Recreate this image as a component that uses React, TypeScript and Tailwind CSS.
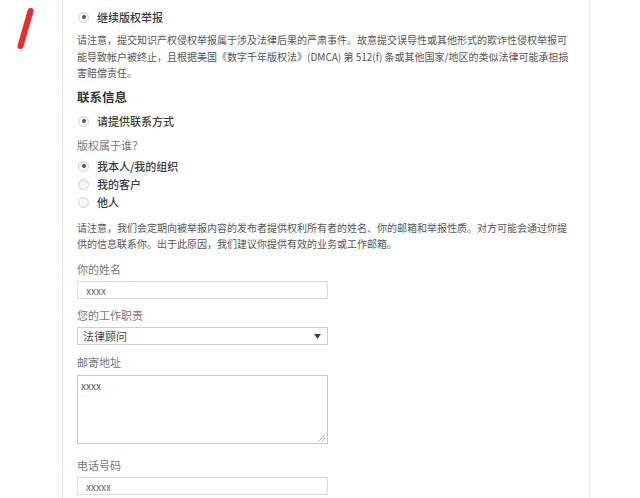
import React from "react";

const font = { fontFamily: '"Noto Sans CJK SC", "Noto Sans", sans-serif' };

function Radio({ checked, label }: { checked?: boolean; label: string }) {
  return (
    <div className="flex h-[18px] items-center">
      <span className="ml-[1px] flex h-[11px] w-[11px] items-center justify-center rounded-full border border-[#d4d4d4] bg-[#f7f7f7] shadow-[inset_0_1px_1px_rgba(0,0,0,0.06)]">
        {checked && <span className="h-[4px] w-[4px] rounded-full bg-[#555]" />}
      </span>
      <span className="ml-[8px] text-[11px] font-medium leading-[18px] text-[#3a3a3a]">{label}</span>
    </div>
  );
}

function Label({ text, mt }: { text: string; mt: string }) {
  return (
    <div className={`${mt} flex h-[18px] items-center text-[11px] text-[#777]`}>{text}</div>
  );
}

export default function App() {
  return (
    <div className="flex h-[498px] w-[640px] overflow-hidden bg-white" style={font}>
      <div className="w-[62px] shrink-0">
        <svg width="62" height="60" viewBox="0 0 62 60">
          <path d="M30.5 11 L20.5 46" stroke="#ee2a2a" strokeWidth="6" strokeLinecap="round" fill="none" />
        </svg>
      </div>
      <div className="flex w-[528px] shrink-0 flex-col border-l border-r border-[#e6e6e6] pl-[14px]">
        <div className="mt-[8px]">
          <Radio checked label="继续版权举报" />
        </div>
        <div className="mt-[6px] text-[10px] leading-[16.5px] text-[#555] whitespace-nowrap">
          <div>请注意，提交知识产权侵权举报属于涉及法律后果的严肃事件。故意提交误导性或其他形式的欺诈性侵权举报可</div>
          <div>能导致帐户被终止，且根据美国《数字千年版权法》(DMCA) 第 512(f) 条或其他国家/地区的类似法律可能承担损</div>
          <div>害赔偿责任。</div>
        </div>
        <div className="mt-[6.5px] flex h-[18px] items-center text-[12.5px] font-bold text-[#333]">联系信息</div>
        <div className="mt-[6px]">
          <Radio checked label="请提供联系方式" />
        </div>
        <Label text="版权属于谁？" mt="mt-[6px]" />
        <div className="mt-[3px] flex flex-col">
          <Radio checked label="我本人/我的组织" />
          <Radio label="我的客户" />
          <Radio label="他人" />
        </div>
        <div className="mt-[9px] text-[10px] leading-[16px] text-[#555] whitespace-nowrap">
          <div>请注意，我们会定期向被举报内容的发布者提供权利所有者的姓名、你的邮箱和举报性质。对方可能会通过你提</div>
          <div>供的信息联系你。出于此原因，我们建议你提供有效的业务或工作邮箱。</div>
        </div>
        <Label text="你的姓名" mt="mt-[8px]" />
        <div className="mt-[3px] flex h-[18px] w-[251px] items-center border border-[#dcdcdc] pl-[8px] text-[10px] text-[#666]">xxxx</div>
        <Label text="您的工作职责" mt="mt-[7px]" />
        <div className="mt-[3px] flex h-[18px] w-[251px] items-center justify-between border border-[#d0d0d0] pl-[5px] pr-[6px] text-[11px] text-[#444]">
          <span>法律顾问</span>
          <svg width="7" height="5" viewBox="0 0 7 5"><path d="M0 0 L7 0 L3.5 5 Z" fill="#444" /></svg>
        </div>
        <Label text="邮寄地址" mt="mt-[8px]" />
        <div className="relative mt-[4px] h-[69px] w-[251px] border border-[#c8c8c8] pl-[3px] pt-[3px] text-[10px] leading-[14px] text-[#555]">
          xxxx
          <svg className="absolute bottom-[1px] right-[1px]" width="8" height="8" viewBox="0 0 8 8">
            <path d="M7 1 L1 7 M7 4 L4 7" stroke="#999" strokeWidth="0.8" />
          </svg>
        </div>
        <Label text="电话号码" mt="mt-[12px]" />
        <div className="mt-[3px] flex h-[18px] w-[251px] items-center border border-[#dcdcdc] pl-[8px] text-[10px] text-[#666]">xxxxx</div>
      </div>
    </div>
  );
}
